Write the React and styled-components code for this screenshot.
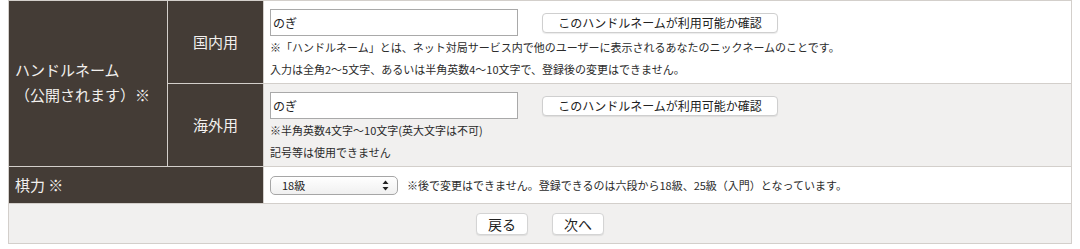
import * as React from "react";
import styled, { createGlobalStyle } from "styled-components";

const GlobalStyle = createGlobalStyle`
  body {
    margin: 0 8px;
    background: #ffffff;
    font-family: "Noto Sans CJK JP", "Noto Sans", sans-serif;
    color: #333333;
  }
`;

export default function App() {
  return (
    <>
      <GlobalStyle />
      <Table>
        <HeadCell $row="1 / 3" $col="1 / 2">
          <MainLabel>
            ハンドルネーム
            <br />
            （公開されます）※
          </MainLabel>
        </HeadCell>
        <HeadCell $row="1 / 2" $col="2 / 3" $center>
          国内用
        </HeadCell>
        <FieldCell $row="1 / 2">
          <InputLine>
            <TextInput defaultValue="のぎ" />
            <CheckButton type="button">このハンドルネームが利用可能か確認</CheckButton>
          </InputLine>
          <Note>
            ※「ハンドルネーム」とは、ネット対局サービス内で他のユーザーに表示されるあなたのニックネームのことです。
            <br />
            入力は全角2～5文字、あるいは半角英数4～10文字で、登録後の変更はできません。
          </Note>
        </FieldCell>

        <HeadCell $row="2 / 3" $col="2 / 3" $center>
          海外用
        </HeadCell>
        <FieldCell $row="2 / 3" $grey>
          <InputLine>
            <TextInput defaultValue="のぎ" />
            <CheckButton type="button">このハンドルネームが利用可能か確認</CheckButton>
          </InputLine>
          <Note>
            ※半角英数4文字～10文字(英大文字は不可)
            <br />
            記号等は使用できません
          </Note>
        </FieldCell>

        <HeadCell $row="3 / 4" $col="1 / 3">
          棋力 ※
        </HeadCell>
        <FieldCell $row="3 / 4" $inline>
          <SelectWrap>
            <Select defaultValue="18">
              <option value="6d">六段</option>
              <option value="18">18級</option>
              <option value="25">25級（入門）</option>
            </Select>
            <SelectArrows width="7" height="11" viewBox="0 0 7 11">
              <path d="M3.5 0.5 L6.5 4 L0.5 4 Z" fill="#222" />
              <path d="M3.5 10.5 L6.5 7 L0.5 7 Z" fill="#222" />
            </SelectArrows>
          </SelectWrap>
          <InlineNote>
            ※後で変更はできません。登録できるのは六段から18級、25級（入門）となっています。
          </InlineNote>
        </FieldCell>

        <ActionRow>
          <NavButton type="button">戻る</NavButton>
          <NavButton type="button">次へ</NavButton>
        </ActionRow>
      </Table>
    </>
  );
}

const Table = styled.div`
  display: grid;
  grid-template-columns: 158px 95px 1fr;
  grid-template-rows: 82px 82px 36px 39px;
  gap: 1px;
  padding: 1px;
  background: #d3cfcb;
`;

const HeadCell = styled.div`
  grid-row: ${p => p.$row};
  grid-column: ${p => p.$col};
  background: #443c36;
  color: #f2f0ee;
  font-size: 15px;
  display: flex;
  align-items: center;
  justify-content: ${p => (p.$center ? "center" : "flex-start")};
  padding-left: ${p => (p.$center ? "0" : "6px")};
  padding-bottom: 2px;
`;

const MainLabel = styled.div`
  line-height: 25px;
  padding-bottom: 2px;
`;

const FieldCell = styled.div`
  grid-row: ${p => p.$row};
  grid-column: 3 / 4;
  background: ${p => (p.$grey ? "#f1f0ef" : "#ffffff")};
  padding: ${p => (p.$inline ? "0 6px" : "8px 6px 0")};
  display: flex;
  flex-direction: ${p => (p.$inline ? "row" : "column")};
  align-items: ${p => (p.$inline ? "center" : "flex-start")};
  gap: ${p => (p.$inline ? "9px" : "0")};
`;

const InputLine = styled.div`
  display: flex;
  align-items: center;
  gap: 24px;
`;

const TextInput = styled.input`
  box-sizing: border-box;
  width: 248px;
  height: 27px;
  margin: 0;
  padding: 0 2px;
  border: 1px solid #a9a9a9;
  background: #ffffff;
  font-family: inherit;
  font-size: 12px;
  color: #222;
`;

const CheckButton = styled.button`
  box-sizing: border-box;
  height: 20px;
  width: 236px;
  padding: 0;
  border: 1px solid #cfcfcf;
  border-radius: 4px;
  background: #ffffff;
  box-shadow: 0 1px 1px rgba(0, 0, 0, 0.08);
  font-family: inherit;
  font-size: 12px;
  line-height: 18px;
  color: #222;
`;

const Note = styled.div`
  font-size: 11px;
  line-height: 22px;
  color: #2b2b2b;
`;

const SelectWrap = styled.span`
  position: relative;
  display: inline-flex;
`;

const Select = styled.select`
  appearance: none;
  box-sizing: border-box;
  width: 128px;
  height: 19px;
  margin: 0;
  padding: 0 0 0 11px;
  border: 1px solid #a6a6a6;
  border-radius: 5px;
  background: linear-gradient(#ffffff, #f0f0f0);
  font-family: inherit;
  font-size: 11px;
  color: #222;
`;

const SelectArrows = styled.svg`
  position: absolute;
  right: 9px;
  top: 4px;
  pointer-events: none;
`;

const InlineNote = styled.span`
  font-size: 11px;
  color: #2b2b2b;
`;

const ActionRow = styled.div`
  grid-row: 4 / 5;
  grid-column: 1 / 4;
  background: #f1f0ef;
  display: flex;
  align-items: center;
  justify-content: center;
  gap: 24px;
`;

const NavButton = styled.button`
  box-sizing: border-box;
  width: 52px;
  height: 22px;
  padding: 0;
  border: 1px solid #d4d4d4;
  border-radius: 4px;
  background: #ffffff;
  box-shadow: 0 1px 1px rgba(0, 0, 0, 0.08);
  font-family: inherit;
  font-size: 14px;
  line-height: 20px;
  color: #222;
`;
